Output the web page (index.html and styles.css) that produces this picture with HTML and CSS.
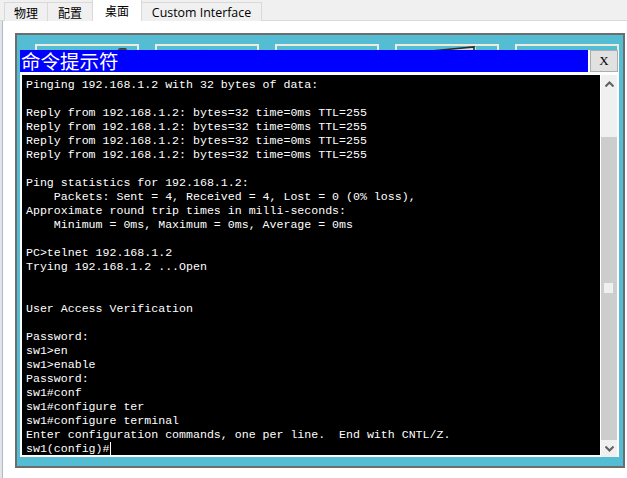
FILE: index.html
```html
<!DOCTYPE html>
<html lang="zh-CN">
<head>
  <meta charset="UTF-8">
  <title>桌面 - 命令提示符</title>
  <link rel="stylesheet" href="styles.css">
</head>

<body>
  <div class="tabs">
    <div class="tab cjk tab-phys">物理</div>
    <div class="tab cjk tab-conf">配置</div>
    <div class="tab cjk active">桌面</div>
    <div class="tab tab-custom">Custom Interface</div>
  </div>

  <div class="main">
    <div class="desktop">
      <!-- desktop icons, mostly hidden behind the prompt window -->
      <div class="icons">
        <div class="icon"><span class="pic pic-a"></span></div>
        <div class="icon"><span class="pic pic-b"></span></div>
        <div class="icon"></div>
        <div class="icon">
          <svg class="pic pic-monitor" width="66" height="8" viewBox="0 0 66 8">
            <polygon points="0,7 64,1 66,1 66,8 0,8" fill="#d7dbe4"/>
            <polyline points="0,7 64,1 64,8" fill="none" stroke="#2a2a2a" stroke-width="1.6"/>
          </svg>
        </div>
        <div class="icon"><span class="pic pic-c"></span></div>
      </div>

      <div class="window">
        <div class="titlebar">
          <div class="title">命令提示符</div>
          <div class="close">X</div>
        </div>
        <div class="body">
<pre class="terminal">Pinging 192.168.1.2 with 32 bytes of data:

Reply from 192.168.1.2: bytes=32 time=0ms TTL=255
Reply from 192.168.1.2: bytes=32 time=0ms TTL=255
Reply from 192.168.1.2: bytes=32 time=0ms TTL=255
Reply from 192.168.1.2: bytes=32 time=0ms TTL=255

Ping statistics for 192.168.1.2:
    Packets: Sent = 4, Received = 4, Lost = 0 (0% loss),
Approximate round trip times in milli-seconds:
    Minimum = 0ms, Maximum = 0ms, Average = 0ms

PC&gt;telnet 192.168.1.2
Trying 192.168.1.2 ...Open


User Access Verification

Password: 
sw1&gt;en
sw1&gt;enable
Password: 
sw1#conf
sw1#configure ter
sw1#configure terminal
Enter configuration commands, one per line.  End with CNTL/Z.
sw1(config)#<span class="caret"></span></pre>
          <div class="scrollbar">
            <div class="arrow">
              <svg width="9" height="6" viewBox="0 0 9 6"><path d="M0.5 5.5 L4.5 1.5 L8.5 5.5" fill="none" stroke="#606060" stroke-width="2"/></svg>
            </div>
            <div class="track">
              <div class="thumb"><span class="grip"></span></div>
            </div>
            <div class="arrow">
              <svg width="9" height="6" viewBox="0 0 9 6"><path d="M0.5 0.5 L4.5 4.5 L8.5 0.5" fill="none" stroke="#606060" stroke-width="2"/></svg>
            </div>
          </div>
        </div>
      </div>
    </div>
  </div>
</body>
</html>
```

FILE: styles.css
```css
body {
  margin: 0;
  padding: 0;
  background-color: #fff;
  font-family: "Open Sans", "Noto Sans CJK SC", sans-serif;
  width: 627px;
  height: 478px;
  overflow: hidden;
}

/* Tab strip */
.tabs {
  display: flex;
  align-items: flex-end;
  height: 20px;
  padding-left: 4px;
  background-color: #f0f0f0;
  border-bottom: 1px solid #d9d9d9;
}

.tab {
  box-sizing: border-box;
  height: 19px;
  margin-bottom: -1px;
  border: 1px solid #d9d9d9;
  border-bottom: none;
  border-left: none;
  background-color: #f0f0f0;
  font-size: 12px;
  line-height: 19px;
  text-align: center;
  color: #000;
}

.tab.cjk {
  font-family: "Noto Sans CJK SC", sans-serif;
}

.tab-phys {
  width: 44px;
  border-left: 1px solid #d9d9d9;
}

.tab-conf {
  width: 45px;
}

.tab.active {
  width: 50px;
  height: 22px;
  margin-left: -1px;
  background-color: #fff;
  border-left: 1px solid #d9d9d9;
  line-height: 21px;
}

.tab-custom {
  width: 120px;
  font-size: 12.4px;
}

.main {
  height: 457px;
  padding: 12px 0 0 15px;
  box-sizing: border-box;
  border-left: 2px solid #e4e4e4;
  position: relative;
}

.main::before {
  content: "";
  position: absolute;
  left: 0;
  top: 0;
  bottom: 0;
  width: 1px;
  background-color: #a9bcd6;
}

/* Desktop */
.desktop {
  position: relative;
  margin-left: -2px;
  width: 606px;
  height: 431px;
  border: 2px solid #6d6d6d;
  background-color: #54bdd4;
}

.icons {
  display: flex;
  gap: 16px;
  padding: 9px 0 0 18px;
}

.icon {
  position: relative;
  width: 100px;
  height: 80px;
  border: 2px solid #ecebdc;
}

.pic {
  position: absolute;
}

.pic-a {
  left: 81px;
  top: 2px;
  width: 9px;
  height: 8px;
  background: linear-gradient(#3d3d3d, #7a7a7a);
  border-radius: 2px 2px 0 0;
}

.pic-b {
  left: 32px;
  top: 3px;
  width: 28px;
  height: 6px;
  background: radial-gradient(ellipse at 50% 100%, rgba(40, 40, 60, 0.7), rgba(84, 189, 212, 0) 70%);
}

.pic-monitor {
  left: 13px;
  top: 0;
}

.pic-c {
  left: 34px;
  top: 3px;
  width: 22px;
  height: 6px;
  background: radial-gradient(ellipse at 50% 100%, rgba(60, 70, 120, 0.6), rgba(84, 189, 212, 0) 70%);
}

/* Command prompt window */
.window {
  position: absolute;
  left: 3px;
  top: 15px;
  width: 599px;
  height: 407px;
  background-color: #fff;
  display: flex;
  flex-direction: column;
}

.titlebar {
  display: flex;
  height: 22px;
  gap: 2px;
}

.title {
  width: 568px;
  background-color: #0000ff;
  color: #fff;
  font-family: "Noto Sans CJK SC", sans-serif;
  font-size: 19.5px;
  line-height: 22px;
  padding-left: 1px;
  box-sizing: border-box;
}

.close {
  width: 28px;
  box-sizing: border-box;
  border: 1px solid #adadad;
  background-color: #e1e1e1;
  font-family: "Liberation Serif", serif;
  font-size: 13px;
  line-height: 20px;
  text-align: center;
  color: #000;
}

.body {
  display: flex;
  margin-top: 3px;
  padding-left: 2px;
  height: 382px;
}

.terminal {
  flex: 1;
  margin: 0;
  height: 380px;
  padding: 3px 0 0 4px;
  box-sizing: border-box;
  background-color: #000;
  color: #fff;
  font-family: "Liberation Mono", monospace;
  font-size: 11.6px;
  line-height: 14px;
  overflow: hidden;
}

.caret {
  display: inline-block;
  width: 1px;
  height: 13px;
  background-color: #fff;
  vertical-align: -3px;
}

/* Scrollbar */
.scrollbar {
  width: 16px;
  margin: 0 2px 0 1px;
  background-color: #f0f0f0;
  display: flex;
  flex-direction: column;
}

.arrow {
  height: 17px;
  display: flex;
  align-items: center;
  justify-content: center;
}

.track {
  flex: 1;
  display: flex;
  flex-direction: column;
  padding-top: 45px;
}

.thumb {
  flex: 1;
  background-color: #cdcdcd;
  position: relative;
}

.grip {
  position: absolute;
  left: 3px;
  top: 146px;
  width: 9px;
  height: 10px;
  background-color: #f0f0f0;
}
```
